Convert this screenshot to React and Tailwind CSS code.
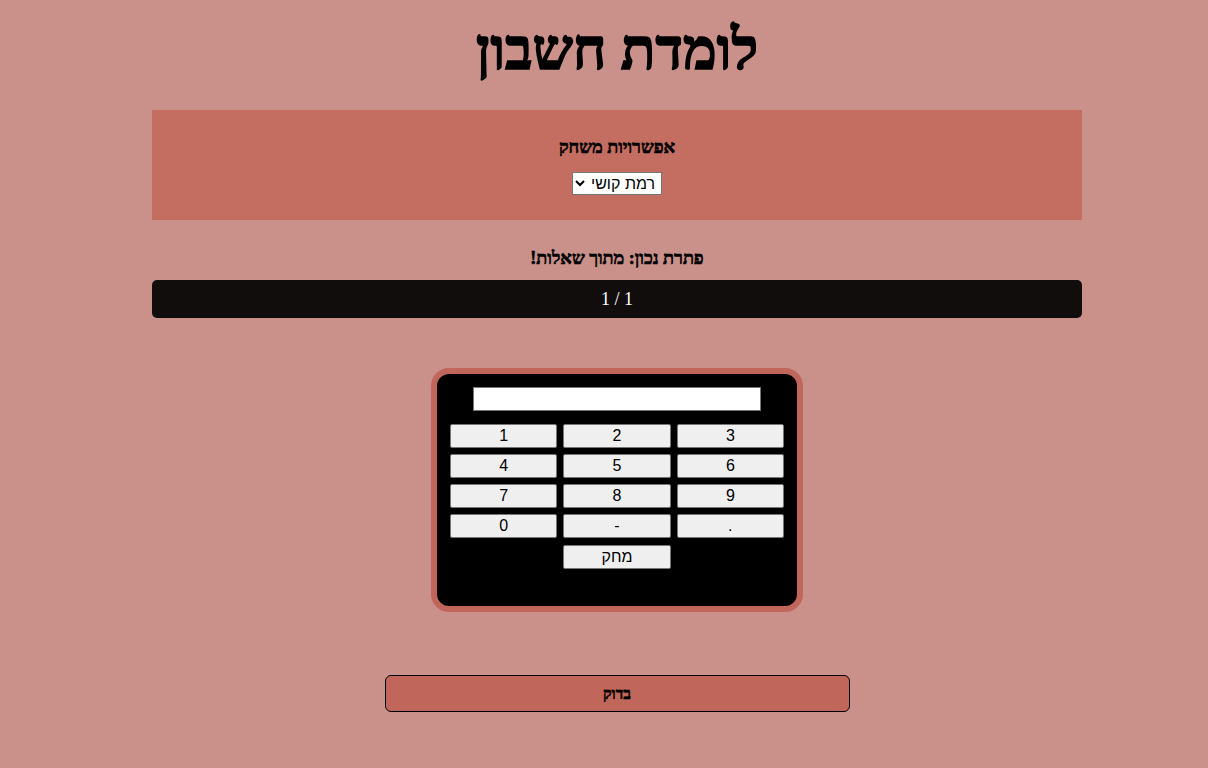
import React from "react";

const keys = ["1", "2", "3", "4", "5", "6", "7", "8", "9", "0", "-", "."];

const App = () => {
  return (
    <div dir="rtl" className="min-h-screen bg-[#c9918a] pl-[26px] font-['Liberation_Serif',serif] text-black">
      <h1 className="pt-[18px] text-center text-[57px] leading-[64px] font-bold [-webkit-text-stroke:1.6px_black]">לומדת חשבון</h1>

      <div className="mx-auto mt-[28px] w-[930px] h-[110px] bg-[#c46e62] flex flex-col items-center pt-[25px]">
        <h3 className="text-[18px] leading-[24px] font-bold [-webkit-text-stroke:0.6px_black]">אפשרויות משחק</h3>
        <select className="mt-[13px] h-[23px] bg-white border border-[#767676] font-['Liberation_Sans',sans-serif] text-[16px] px-[2px]">
          <option>רמת קושי</option>
        </select>
      </div>

      <p className="mt-[26px] text-center text-[18px] leading-[24px] font-bold [-webkit-text-stroke:0.6px_black]">פתרת נכון: מתוך שאלות!</p>

      <div className="mx-auto mt-[10px] w-[930px] h-[38px] rounded-[5px] bg-[#120d0d] text-white text-[18px] flex items-center justify-center">
        1 / 1
      </div>

      <div className="flex justify-center mt-[50px]">
        <div dir="ltr" className="w-[372px] h-[244px] rounded-[18px] border-[6px] border-[#c0665a] bg-black px-[13px] pt-[13px] font-['Liberation_Sans',sans-serif]">
          <div className="flex justify-center">
            <input className="w-[288px] h-[24px] bg-white border border-[#767676]" />
          </div>
          <div className="mt-[13px] grid grid-cols-3 gap-x-[6px] gap-y-[6px]">
            {keys.map((k) => (
              <button key={k} className="h-[24px] bg-[#efefef] border border-[#767676] rounded-[2px] text-[16px] leading-none">
                {k}
              </button>
            ))}
            <div />
            <button className="mt-[1px] h-[24px] bg-[#efefef] border border-[#767676] rounded-[2px] text-[16px] leading-none">
              מחק
            </button>
          </div>
        </div>
      </div>

      <div className="flex justify-center mt-[63px]">
        <button className="w-[465px] h-[37px] bg-[#c0665a] border border-black rounded-[6px] text-[16px] font-bold [-webkit-text-stroke:0.5px_black]">
          בדוק
        </button>
      </div>
    </div>
  );
};

export default App;
